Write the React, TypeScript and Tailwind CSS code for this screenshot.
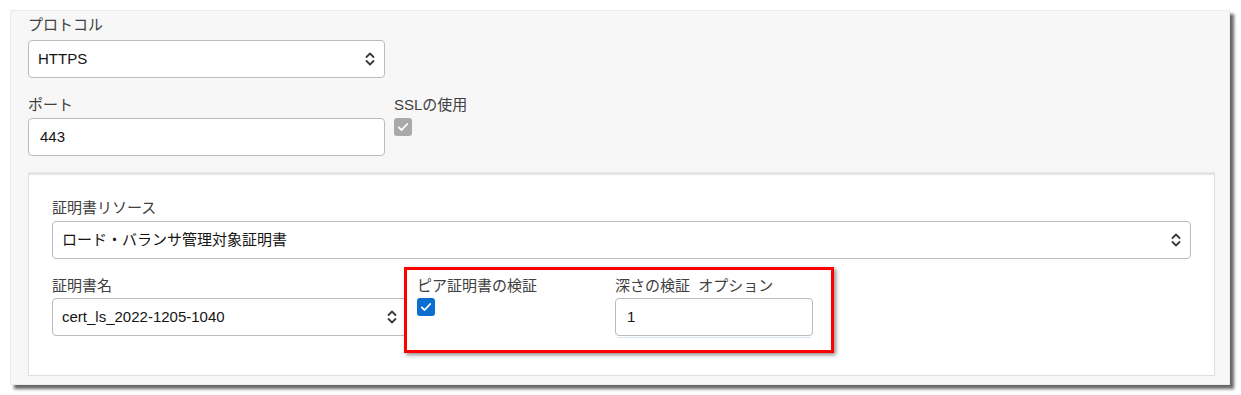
import React from "react";

function Chevrons() {
  return (
    <svg width="10" height="16" viewBox="0 0 10 16" fill="none" stroke="#3a3a3a" strokeWidth={1.8} strokeLinecap="round" strokeLinejoin="round">
      <path d="M1.5 6 5 2.5 8.5 6" />
      <path d="M1.5 10 5 13.5 8.5 10" />
    </svg>
  );
}

function Check({ color }: { color: string }) {
  return (
    <span className={`flex h-[18px] w-[18px] items-center justify-center rounded-[3px] ${color}`}>
      <svg width="12" height="12" viewBox="0 0 12 12" fill="none" stroke="white" strokeWidth={1.8} strokeLinecap="round" strokeLinejoin="round">
        <path d="M1.8 6.4 4.6 9 10.2 3" />
      </svg>
    </span>
  );
}

function Select({ value, className }: { value: string; className: string }) {
  return (
    <div className={`flex h-[38px] items-center justify-between rounded-[4px] border border-[#b8bbc0] bg-white pl-[9px] pr-[9px] text-[15px] text-[#161513] ${className}`}>
      <span>{value}</span>
      <Chevrons />
    </div>
  );
}

function Input({ value, className }: { value: string; className: string }) {
  return (
    <div className={`flex h-[38px] items-center rounded-[4px] border border-[#b8bbc0] bg-white pl-[11px] text-[15px] text-[#161513] ${className}`}>
      {value}
    </div>
  );
}

export default function App() {
  return (
    <div className="min-h-screen bg-white pl-[10px] pt-[10px] font-['Liberation_Sans','Noto_Sans_CJK_JP',sans-serif]">
      <div className="relative flex h-[375px] w-[1220px] flex-col border border-[#ebebeb] bg-[#f7f7f7] pl-[17px] pr-[14px] pt-[3px] shadow-[4px_4px_3px_rgba(0,0,0,0.6)]">
        {/* Protocol */}
        <div className="h-[22px] text-[15px] leading-[22px] text-[#404040]">プロトコル</div>
        <Select value="HTTPS" className="mt-[4px] w-[357px]" />

        {/* Port + SSL */}
        <div className="mt-[16px] flex gap-[9px]">
          <div className="flex flex-col">
            <div className="h-[22px] text-[15px] leading-[22px] text-[#404040]">ポート</div>
            <Input value="443" className="mt-[2px] w-[357px]" />
          </div>
          <div className="flex flex-col">
            <div className="h-[22px] text-[15px] leading-[22px] text-[#404040]">SSLの使用</div>
            <div className="mt-[2px]">
              <Check color="bg-[#a9a9a9]" />
            </div>
          </div>
        </div>

        {/* Certificate card */}
        <div className="mt-[16px] flex h-[204px] flex-col border border-t-[3px] border-[#dedfe2] border-t-[#e3e5e8] bg-white px-[23px] pt-[22px]">
          <div className="h-[22px] text-[15px] leading-[22px] text-[#404040]">証明書リソース</div>
          <Select value="ロード・バランサ管理対象証明書" className="mt-[2px] w-full" />

          <div className="mt-[16px] flex">
            <div className="flex flex-col">
              <div className="h-[22px] text-[15px] leading-[22px] text-[#404040]">証明書名</div>
              <Select value="cert_ls_2022-1205-1040" className="mt-[1px] w-[355px]" />
            </div>
            <div className="ml-[10px] flex w-[198px] flex-col">
              <div className="h-[22px] text-[15px] leading-[22px] text-[#404040]">ピア証明書の検証</div>
              <div className="mt-[1px]">
                <Check color="bg-[#0b6fd0]" />
              </div>
            </div>
            <div className="flex flex-col">
              <div className="h-[22px] text-[15px] leading-[22px] text-[#404040]">深さの検証&nbsp;&nbsp;オプション</div>
              <Input value="1" className="mt-[1px] w-[198px]" />
              <div className="mx-[2px] mt-[1px] h-px bg-[#d6e6f7]" />
            </div>
          </div>
        </div>

        {/* Annotation box */}
        <div className="absolute left-[393px] top-[256px] h-[86px] w-[430px] border-[3px] border-[#ff0000] shadow-[2px_2px_4px_rgba(0,0,0,0.45)]" />
      </div>
    </div>
  );
}
